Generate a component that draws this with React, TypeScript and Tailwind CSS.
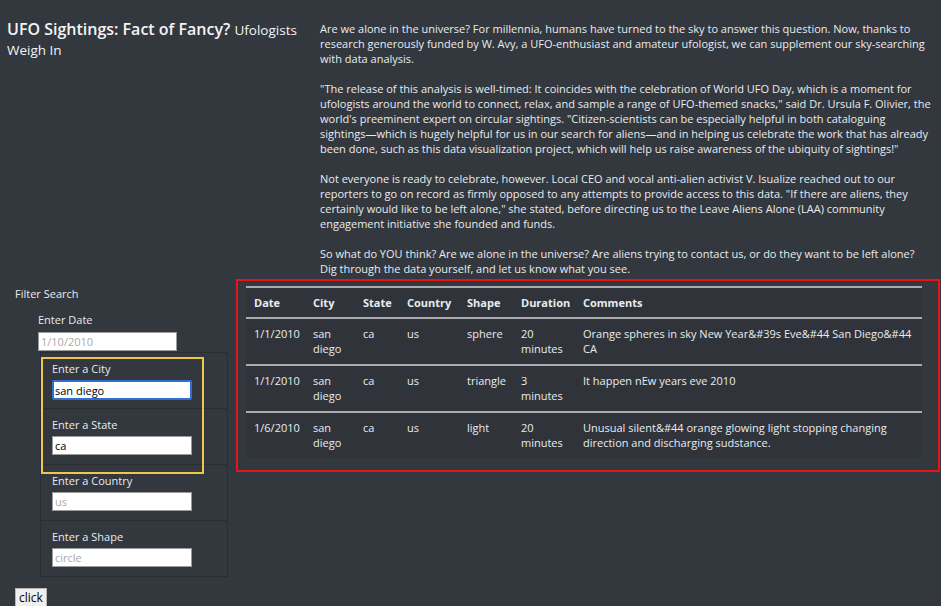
import React from 'react';

const rows = [
  {
    date: '1/1/2010',
    city: 'san diego',
    state: 'ca',
    country: 'us',
    shape: 'sphere',
    duration: '20 minutes',
    comments: 'Orange spheres in sky New Year&#39s Eve&#44 San Diego&#44 CA',
  },
  {
    date: '1/1/2010',
    city: 'san diego',
    state: 'ca',
    country: 'us',
    shape: 'triangle',
    duration: '3 minutes',
    comments: 'It happen nEw years eve 2010',
  },
  {
    date: '1/6/2010',
    city: 'san diego',
    state: 'ca',
    country: 'us',
    shape: 'light',
    duration: '20 minutes',
    comments: 'Unusual silent&#44 orange glowing light stopping changing direction and discharging sudstance.',
  },
];

const filters = [
  { label: 'Enter a City', value: 'san diego', placeholder: '', focus: true },
  { label: 'Enter a State', value: 'ca', placeholder: '', focus: false },
  { label: 'Enter a Country', value: '', placeholder: 'us', focus: false },
  { label: 'Enter a Shape', value: '', placeholder: 'circle', focus: false },
];

export default function App() {
  return (
    <div
      className="min-h-screen w-full bg-[#33373e] text-[#e9ecef] flex flex-col"
      style={{ fontFamily: '"Open Sans", "Liberation Sans", sans-serif' }}
    >

      {/* header row */}
      <div className="flex w-full">
        <div className="w-[314px] px-[7px] pt-[20px]">
          <h1 className="text-[16px] leading-[19px] font-semibold text-[#f3f4f6]">
            UFO Sightings: Fact of Fancy?{' '}
            <span className="text-[13.5px] font-medium">Ufologists Weigh In</span>
          </h1>
        </div>

        <div className="w-[619px] pl-[6px] pt-[21px] text-[11px] leading-[15px] flex flex-col gap-[15px]">
          <p>
            Are we alone in the universe? For millennia, humans have turned to the sky to answer this question. Now, thanks to research generously funded by W. Avy, a UFO-enthusiast and amateur ufologist, we can supplement our sky-searching with data analysis.
          </p>
          <p>
            "The release of this analysis is well-timed: It coincides with the celebration of World UFO Day, which is a moment for ufologists around the world to connect, relax, and sample a range of UFO-themed snacks," said Dr. Ursula F. Olivier, the world's preeminent expert on circular sightings. "Citizen-scientists can be especially helpful in both cataloguing sightings—which is hugely helpful for us in our search for aliens—and in helping us celebrate the work that has already been done, such as this data visualization project, which will help us raise awareness of the ubiquity of sightings!"
          </p>
          <p>
            Not everyone is ready to celebrate, however. Local CEO and vocal anti-alien activist V. Isualize reached out to our reporters to go on record as firmly opposed to any attempts to provide access to this data. "If there are aliens, they certainly would like to be left alone," she stated, before directing us to the Leave Aliens Alone (LAA) community engagement initiative she founded and funds.
          </p>
          <p>
            So what do YOU think? Are we alone in the universe? Are aliens trying to contact us, or do they want to be left alone? Dig through the data yourself, and let us know what you see.
          </p>
        </div>
      </div>

      {/* filters + table */}
      <div className="flex w-full mt-[3px]">

        <div className="w-[236px] flex flex-col text-[11px] leading-[15px]">
          <p className="pl-[15px] pt-[7px]">Filter Search</p>

          <div className="pl-[38px] mt-[11px] flex flex-col gap-[5px]">
            <label>Enter Date</label>
            <input
              className="w-[139px] h-[19px] bg-white border border-[#9a9a9a] px-[2px] text-[11px] text-black placeholder:text-[#a9a9a9] outline-none"
              placeholder="1/10/2010"
            />
          </div>

          <div className="relative ml-[40px] mt-[1px] w-[188px] flex flex-col">
            {filters.map((f) => (
              <div
                key={f.label}
                className="h-[57px] border border-[#2a2e33] -mt-px first:mt-0 pl-[11px] pt-[8px] flex flex-col gap-[4px]"
              >
                <label>{f.label}</label>
                <input
                  className={
                    f.focus
                      ? 'w-[140px] h-[20px] bg-white border-2 border-[#2f6fd1] rounded-[2px] px-[1px] text-[11px] text-black outline-none'
                      : 'w-[140px] h-[19px] bg-white border border-[#9a9a9a] px-[2px] text-[11px] text-black placeholder:text-[#a9a9a9] outline-none'
                  }
                  defaultValue={f.value}
                  placeholder={f.placeholder}
                />
              </div>
            ))}

            {/* highlight around city + state */}
            <div className="absolute left-[1px] top-[5px] w-[163px] h-[117px] border-2 border-[#eec84c] pointer-events-none" />
          </div>

          <div className="pl-[15px] mt-[11px]">
            <button className="h-[20px] px-[3px] bg-[#efefef] border border-[#b8b8b8] text-[12px] text-black leading-none">
              click
            </button>
          </div>
        </div>

        <div className="w-[704px] h-[193px] border-2 border-[#e8141b] pl-[8px] pt-[5px]">
          <table className="w-[676px] table-fixed bg-[#30343a] text-[11px] leading-[15px] border-collapse text-left">
            <thead>
              <tr className="border-t-2 border-b-2 border-[#a9adb2]">
                <th className="w-[59px] px-[8px] py-[7px] font-bold">Date</th>
                <th className="w-[50px] px-[8px] py-[7px] font-bold">City</th>
                <th className="w-[44px] px-[8px] py-[7px] font-bold">State</th>
                <th className="w-[60px] px-[8px] py-[7px] font-bold">Country</th>
                <th className="w-[54px] px-[8px] py-[7px] font-bold">Shape</th>
                <th className="w-[62px] px-[8px] py-[7px] font-bold">Duration</th>
                <th className="pl-[8px] pr-[4px] py-[7px] font-bold">Comments</th>
              </tr>
            </thead>
            <tbody>
              {rows.map((r, i) => (
                <tr
                  key={i}
                  className={i < rows.length - 1 ? 'border-b-2 border-[#a9adb2] align-top' : 'align-top'}
                >
                  <td className="px-[8px] pt-[7px] pb-[8px]">{r.date}</td>
                  <td className="px-[8px] pt-[7px] pb-[8px]">{r.city}</td>
                  <td className="px-[8px] pt-[7px] pb-[8px]">{r.state}</td>
                  <td className="px-[8px] pt-[7px] pb-[8px]">{r.country}</td>
                  <td className="pl-[8px] pr-0 pt-[7px] pb-[8px]">{r.shape}</td>
                  <td className="px-[8px] pt-[7px] pb-[8px]">{r.duration}</td>
                  <td className="pl-[8px] pr-[4px] pt-[7px] pb-[8px]">{r.comments}</td>
                </tr>
              ))}
            </tbody>
          </table>
        </div>

      </div>
    </div>
  );
}
